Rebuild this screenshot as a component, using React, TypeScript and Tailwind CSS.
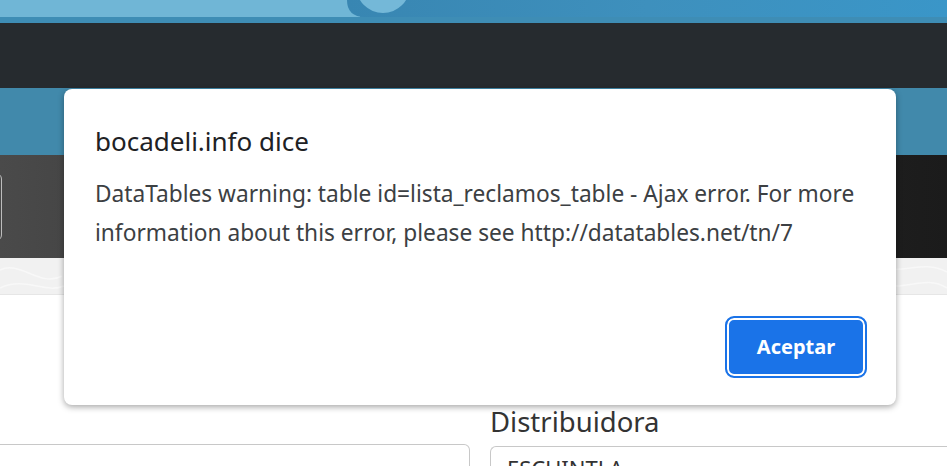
export default function App() {
  return (
    <div className="relative h-[466px] w-[947px] overflow-hidden bg-white font-['Noto_Sans',sans-serif]">
      {/* top banner */}
      <div className="relative h-[23px] bg-[#3e8db5]">
        <svg className="absolute inset-0" width="947" height="23" viewBox="0 0 947 23">
          <defs>
            <linearGradient id="bn" x1="0" x2="1" y1="0" y2="0">
              <stop offset="0" stopColor="#3886b2" />
              <stop offset="0.5" stopColor="#3e90bd" />
              <stop offset="1" stopColor="#3a96c8" />
            </linearGradient>
          </defs>
          <rect x="0" y="0" width="360" height="17" fill="#70b6d6" />
          <path d="M347 0 H947 V17 H365 Q347 17 347 0 Z" fill="url(#bn)" />
          <circle cx="383" cy="-14" r="27" fill="#74b8d8" />
          <rect x="0" y="17" width="947" height="6" fill="#3e8db5" />
        </svg>
      </div>
      <div className="h-[65px] bg-[#262b2f]" />
      <div className="h-[67px] bg-[#4189ab]" />
      <div className="flex h-[103px] items-center bg-gradient-to-r from-[#4a4a4a] via-[#2e2e2e] to-[#1b1b1b]">
        <div className="ml-[-60px] h-[68px] w-[62px] rounded-md border border-[#bdbdbd]" />
      </div>
      <div className="h-[37px] border-b border-[#e6e6e6] bg-[#f1f1f1]">
        <svg width="947" height="36" viewBox="0 0 947 36">
          <path d="M0 12 C20 2 40 30 62 18 M0 30 C25 18 45 36 64 28 M880 6 C900 20 920 0 947 14 M880 26 C905 34 925 16 947 30" stroke="#f8f8f8" strokeWidth="1.5" fill="none" />
        </svg>
      </div>
      {/* form */}
      <div className="flex gap-[20px] pt-[110px]">
        <div className="mt-[39px] h-[40px] w-[470px] rounded-r-md border border-l-0 border-[#c8c8c8]" />
        <div className="flex flex-1 flex-col">
          <div className="h-[41px] text-[27.5px] leading-[34px] text-[#333333]">Distribuidora</div>
          <div className="h-[40px] rounded-l-md border border-r-0 border-[#c8c8c8] px-[16px] pt-[6px] text-[22px] leading-[30px] text-[#333]">ESCUINTLA</div>
        </div>
      </div>

      {/* alert dialog */}
      <div className="absolute left-[64px] top-[89px] flex h-[316px] w-[832px] flex-col rounded-[8px] bg-white px-[31px] shadow-[0_2px_6px_rgba(0,0,0,0.35)] font-['Segoe_UI','Noto_Sans',sans-serif]">
        <div className="mt-[34px] text-[26px] leading-[36px] text-[#202124]">bocadeli.info dice</div>
        <div className="mt-[15px] whitespace-nowrap text-[22.7px] leading-[39px] text-[#3c4043]">
          DataTables warning: table id=lista_reclamos_table - Ajax error. For more
          <br />
          information about this error, please see http://datatables.net/tn/7
        </div>
        <div className="mt-auto mb-[27px] flex justify-end">
          <button className="mr-[-2px] flex h-[62px] w-[142px] items-center justify-center rounded-[9px] border-2 border-[#1a73e8] bg-[#1a73e8] text-[20px] font-bold text-white ring-2 ring-inset ring-white">
            Aceptar
          </button>
        </div>
      </div>
    </div>
  );
}
